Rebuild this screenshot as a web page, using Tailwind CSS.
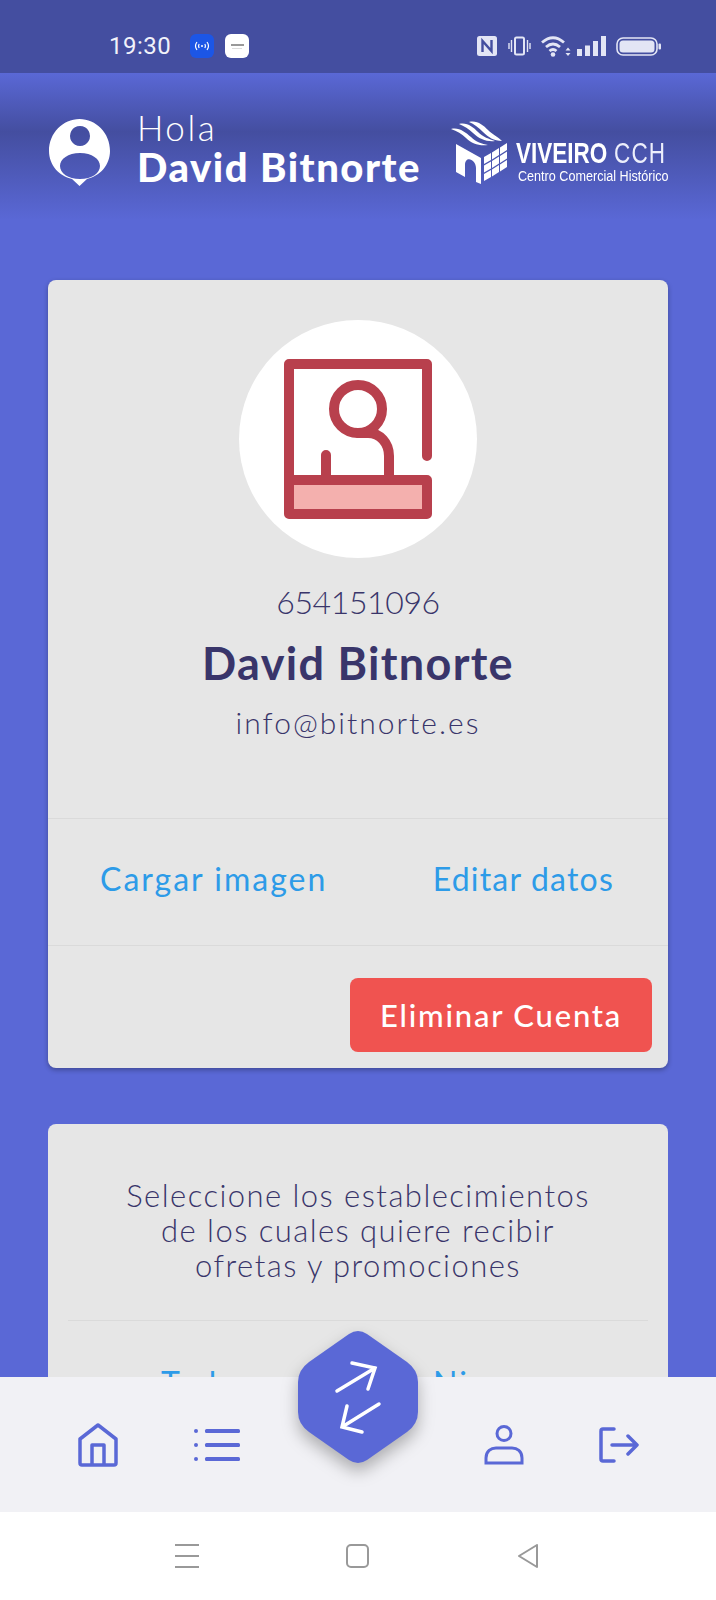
<!DOCTYPE html>
<html lang="es">
<head>
  <meta charset="UTF-8" />
  <meta name="viewport" content="width=device-width, initial-scale=1.0"/>
  <title>Perfil - Viveiro CCH</title>
  <script src="https://cdn.jsdelivr.net/npm/@tailwindcss/browser@4"></script>
</head>
<body class="bg-white font-['Lato',sans-serif]">
<div class="relative w-[716px] h-[1600px] overflow-hidden flex flex-col bg-[#5a68d6]">

  <!-- Status bar -->
  <div class="h-[73px] shrink-0 bg-[#444ea0] flex items-center justify-between pt-[19px] pl-[109px] pr-[55px] text-[#f1f2fa]">
    <div class="flex items-center">
      <span class="text-[24px] font-['Roboto',sans-serif] w-[81px] tracking-[0.5px]">19:30</span>
      <div class="w-[24px] h-[24px] rounded-[6px] bg-[#1c56e6] flex items-center justify-center">
        <svg width="16" height="10" viewBox="0 0 16 10" fill="none" stroke="white" stroke-width="1.2"><path d="M3 1Q0 5 3 9M13 1Q16 5 13 9M5.2 3Q4 5 5.2 7M10.8 3Q12 5 10.8 7"/><circle cx="8" cy="5" r="1" fill="white" stroke="none"/></svg>
      </div>
      <div class="w-[24px] h-[24px] rounded-[6px] bg-white ml-[11px] flex flex-col items-center justify-center">
        <div class="w-[13px] h-[2px] bg-[#999]"></div>
        <div class="w-[10px] h-[1px] bg-[#ddd] mt-[2px]"></div>
      </div>
    </div>
    <div class="flex items-center">
      <svg width="20" height="20" viewBox="0 0 20 20" class="mr-[11px]"><rect width="20" height="20" rx="2.500" fill="#e3e5f5"/><path d="M5.500 16V5L14.500 15V4" fill="none" stroke="#444ea0" stroke-width="2.400"/></svg>
      <svg width="23" height="20" viewBox="0 0 23 20" fill="none" stroke="#e3e5f5" class="mr-[10px]"><rect x="7" y="1.500" width="9" height="17" rx="1.500" stroke-width="2"/><path d="M3.500 4v12M19.500 4v12M1 7v6M22 7v6" stroke-width="1.400"/></svg>
      <svg width="30" height="21" viewBox="0 0 30 21" fill="none" stroke="#e3e5f5" stroke-width="2.800" class="mr-[6px]"><path d="M1 6.500Q12-3 23 6.500M5 11Q12 5 19 11M8.500 15Q12 12 15.500 15"/><circle cx="12" cy="18.500" r="2.300" fill="#e3e5f5" stroke="none"/><path d="M24.500 14.500l2.500-3 2.500 3zM24.500 17l2.500 3 2.500-3z" fill="#e3e5f5" stroke="none"/></svg>
      <svg width="29" height="20" viewBox="0 0 29 20" fill="#e3e5f5" class="mr-[10px]"><rect x="0" y="13" width="5" height="7"/><rect x="8" y="9.500" width="5" height="10.500"/><rect x="16" y="5" width="5" height="15"/><rect x="24" y="0" width="5" height="20"/></svg>
      <svg width="45" height="19" viewBox="0 0 45 19" fill="none"><rect x="1" y="1" width="40" height="17" rx="6" stroke="#e3e5f5" stroke-width="1.600"/><rect x="3.500" y="3.500" width="35" height="12" rx="3.500" fill="#e3e5f5"/><rect x="42.500" y="6.500" width="2.500" height="6" rx="1" fill="#e3e5f5"/></svg>
    </div>
  </div>

  <!-- Header -->
  <div class="h-[147px] shrink-0 bg-gradient-to-b from-[#5a68d6] via-[#444ea0] via-40% to-[#5a68d6] flex items-start pl-[49px] pr-[48px] pt-[36px] text-white">
    <svg width="61" height="67" viewBox="0 0 61 67" class="mt-[10px] mr-[27px] shrink-0">
      <path fill-rule="evenodd" fill="white" d="M30.500 0C47 0 61 14 61 32C61 46 51 57 38 60L30.500 67L23 60C10 57 0 46 0 32C0 14 14 0 30.500 0ZM31 7A10 10 0 1 0 31.010 7ZM31 34C19 34 11 40 11 47C11 54 19 60 31 60C43 60 51 54 51 47C51 40 43 34 31 34Z"/>
    </svg>
    <div class="whitespace-nowrap">
      <div class="text-[35px] leading-[37px] font-light tracking-[2.500px]">Hola</div>
      <div class="text-[40px] leading-[42px] font-black tracking-[1.500px]">David Bitnorte</div>
    </div>
    <div class="ml-auto flex items-start mt-[12px] shrink-0">
      <svg width="56" height="64" viewBox="0 0 56 64" class="shrink-0">
        <path d="M0 8C8 6 14 11 20 16C25 21 31 23 37 24C28 25 21 23 15 17C11 13 6 10 0 8ZM8 3C16 1 22 6 27 11C32 16 38 18 44 20C36 21 28 18 22 12C18 8 13 5 8 3ZM18 1C26-1 32 4 37 9C41 13 46 15 51 20C43 20 37 16 32 11C28 7 23 3 18 1Z" fill="white"/>
        <path d="M5 23L30 37V63L25 61V47C25 38 14 34 14 44V56L5 51Z" fill="white"/>
        <path fill="white" d="M33 36L40 32V39L33 43ZM41 31.400L48 27V34L41 38.400ZM49 26.400L56 22V29L49 33.400ZM33 44.500L40 40.500V47.500L33 51.500ZM41 39.900L48 35.500V42.500L41 46.900ZM49 34.900L56 30.500V37.500L49 41.900ZM33 53L40 49V56L33 60ZM41 48.400L48 44V51L41 55.400ZM49 43.400L56 39V46L49 50.400Z"/>
      </svg>
      <div class="ml-[9px] w-[152px] mt-[16px] font-['Liberation_Sans',sans-serif]">
        <div class="h-[32px] leading-[32px] text-[30px] whitespace-nowrap origin-left scale-x-[0.75]"><span class="font-bold">VIVEIRO</span><span class="font-normal ml-[9px] tracking-[1.500px] text-[#eceefb]">CCH</span></div>
        <div class="h-[14px] text-[14px] leading-[14px] whitespace-nowrap origin-left scale-x-[0.9] ml-[2px]">Centro Comercial Histórico</div>
      </div>
    </div>
  </div>

  <!-- Content -->
  <div class="flex-1 overflow-hidden px-[48px] pt-[60px] flex flex-col gap-[56px]">
    <!-- Profile card -->
    <div class="h-[788px] shrink-0 bg-[#e6e6e6] rounded-[8px] shadow-[0_2px_5px_rgba(0,0,0,0.3)] flex flex-col">
      <div class="h-[538px] shrink-0 flex flex-col items-center pt-[40px]">
        <div class="w-[238px] h-[238px] rounded-full bg-white flex items-center justify-center">
          <svg width="148" height="160" viewBox="0 0 148 160" fill="none" stroke="#b8404d" stroke-width="10" stroke-linecap="round" stroke-linejoin="round">
            <path d="M143 97V5H5V155H143V121H5" />
            <rect x="10" y="126" width="128" height="24" fill="#f4b0ae" stroke="none"/>
            <circle cx="74" cy="50" r="24"/>
            <path d="M42 121V96M105 121V97C105 84 96 74 84 74H74"/>
          </svg>
        </div>
        <div class="mt-[22px] text-[32px] leading-[44px] text-[#39356a] font-light tracking-[-0.4px]">654151096</div>
        <div class="mt-[14px] text-[45px] leading-[50px] text-[#39356a] font-bold tracking-[1.300px]">David Bitnorte</div>
        <div class="mt-[14px] text-[30px] leading-[40px] text-[#39356a] font-light tracking-[2px]">info@bitnorte.es</div>
      </div>
      <div class="h-[128px] shrink-0 border-t border-b border-[#dadada] flex items-center pb-[6px] pl-[52px] pr-[54px] justify-between text-[32px] text-[#2d9be8]">
        <span class="tracking-[2px]">Cargar imagen</span>
        <span class="tracking-[1.200px]">Editar datos</span>
      </div>
      <div class="flex-1 flex justify-end items-start pt-[32px] pr-[16px]">
        <button class="w-[302px] h-[74px] rounded-[8px] bg-[#f05350] text-white text-[31px] font-medium tracking-[1.800px]">Eliminar Cuenta</button>
      </div>
    </div>

    <!-- Establecimientos card -->
    <div class="h-[400px] shrink-0 bg-[#e6e6e6] rounded-[8px] px-[20px] pt-[54px]">
      <p class="text-center text-[31px] leading-[35px] text-[#39356a] font-light tracking-[1.450px]">Seleccione los establecimientos<br>de los cuales quiere recibir<br>ofretas y promociones</p>
      <div class="mt-[37px] border-t border-[#dadada]"></div>
      <div class="flex pt-[38px] text-[32px] text-[#2d9be8] tracking-[2px] pl-[93px]">
        <span class="w-[272px]">Todos</span>
        <span>Ninguno</span>
      </div>
    </div>
  </div>

  <!-- Bottom tab bar -->
  <div class="relative z-10 h-[135px] shrink-0 bg-[#f1f1f5]">
    <svg width="40" height="44" viewBox="0 0 40 44" fill="none" stroke="#5a68d6" stroke-width="3.500" stroke-linejoin="round" class="absolute left-[78px] top-[46px]">
      <path d="M2 16L20 2L38 16V40Q38 42 36 42H4Q2 42 2 40Z"/><path d="M14 42V22H26V42"/>
    </svg>
    <svg width="46" height="34" viewBox="0 0 46 34" fill="#5a68d6" class="absolute left-[194px] top-[51px]">
      <circle cx="2" cy="3" r="2"/><circle cx="2" cy="17" r="2"/><circle cx="2" cy="31" r="2"/>
      <rect x="11" y="1" width="35" height="4" rx="1.500"/><rect x="11" y="15" width="35" height="4" rx="1.500"/><rect x="11" y="29" width="35" height="4" rx="1.500"/>
    </svg>
    <svg width="40" height="40" viewBox="0 0 40 40" fill="none" stroke="#5a68d6" stroke-width="3" class="absolute left-[484px] top-[48px]">
      <ellipse cx="20" cy="8.500" rx="7" ry="7"/><path d="M2 38V33C2 26 7 23 12 23H28C33 23 38 26 38 33V38Z"/>
    </svg>
    <svg width="40" height="36" viewBox="0 0 40 36" fill="none" stroke="#5a68d6" stroke-width="3.500" stroke-linecap="round" stroke-linejoin="round" class="absolute left-[599px] top-[50px]">
      <path d="M15 2H4Q2 2 2 4V32Q2 34 4 34H15"/><path d="M13 18H38M29 9L38 18L29 27"/>
    </svg>
  </div>

  <!-- Android nav -->
  <div class="relative z-10 h-[88px] shrink-0 bg-white">
    <svg width="24" height="26" viewBox="0 0 24 26" stroke="#999" stroke-width="2" class="absolute left-[175px] top-[31px]"><path d="M0 2H24M0 13H24M0 24H24"/></svg>
    <div class="absolute left-[346px] top-[32px] w-[23px] h-[24px] rounded-[5px] border-2 border-[#999]"></div>
    <svg width="22" height="24" viewBox="0 0 22 24" fill="none" stroke="#999" stroke-width="2" stroke-linejoin="round" class="absolute left-[517px] top-[32px]"><path d="M20 1V23L2 12Z"/></svg>
  </div>

  <!-- Hexagon action button -->
  <div class="absolute z-20 left-[297px] top-[1330px] w-[122px] h-[134px] drop-shadow-[0_8px_8px_rgba(0,0,0,0.28)]">
    <svg width="122" height="134" viewBox="0 0 122 134" class="absolute inset-0">
      <path d="M52 4Q61-2 70 4L110 32Q121 40 121 52V82Q121 94 110 102L70 130Q61 136 52 130L12 102Q1 94 1 82V52Q1 40 12 32Z" fill="#5a68d6"/>
      <g fill="none" stroke="white" stroke-width="3.500" stroke-linecap="round">
        <path d="M40 61L78 38M55 33L78 38L71 59"/>
        <path d="M82 74L45 97M50 76L45 97L65 102"/>
      </g>
    </svg>
  </div>
</div>
</body>
</html>
